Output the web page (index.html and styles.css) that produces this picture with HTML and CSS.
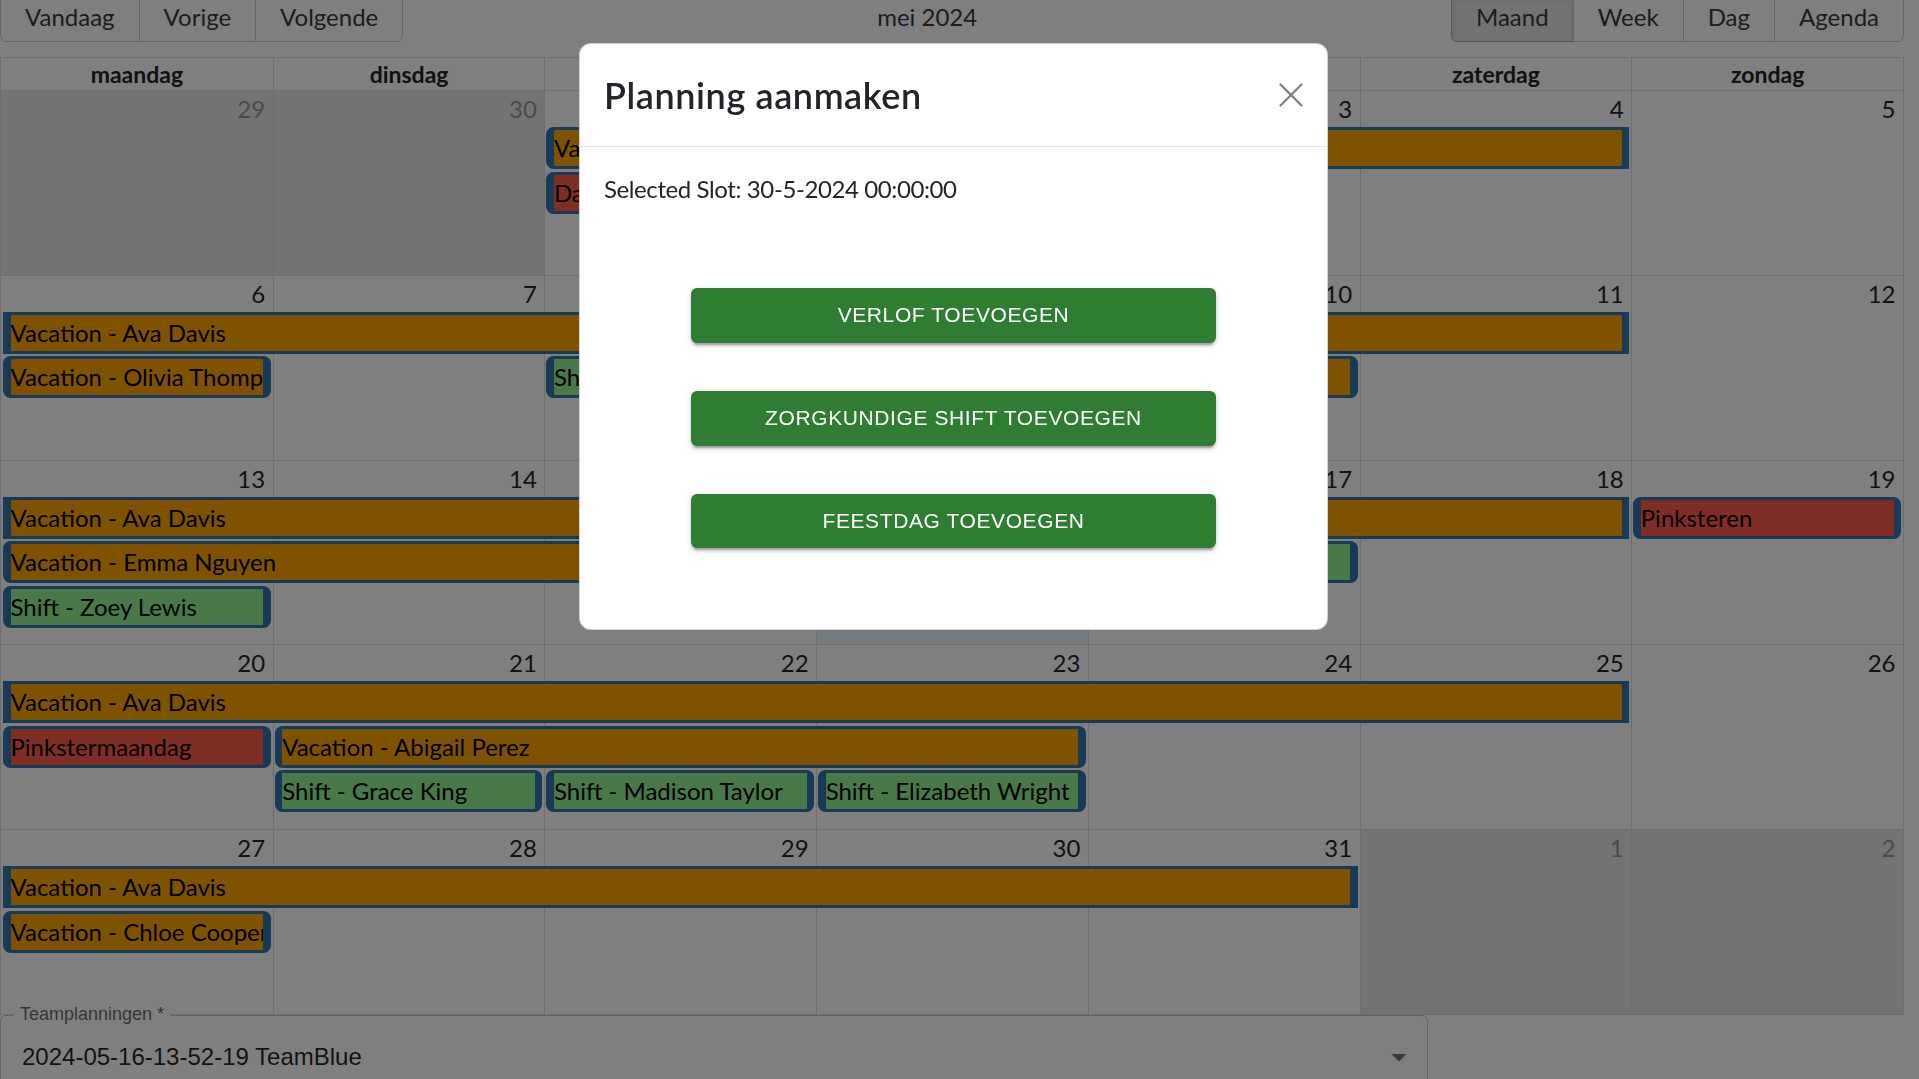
FILE: index.html
```html
<!DOCTYPE html>
<html lang="nl">
<head>
<meta charset="utf-8">
<title>Planning</title>
<link rel="stylesheet" href="styles.css">
</head>
<body>
<div class="app">
  <div class="calendar">
    <div class="toolbar">
      <div class="btn-group">
        <button class="tb-btn">Vandaag</button>
        <button class="tb-btn">Vorige</button>
        <button class="tb-btn">Volgende</button>
      </div>
      <div class="tb-label">mei 2024</div>
      <div class="btn-group">
        <button class="tb-btn active">Maand</button>
        <button class="tb-btn">Week</button>
        <button class="tb-btn">Dag</button>
        <button class="tb-btn">Agenda</button>
      </div>
    </div>

    <div class="month">
      <div class="month-header">
        <div class="hcell">maandag</div>
        <div class="hcell">dinsdag</div>
        <div class="hcell">woensdag</div>
        <div class="hcell">donderdag</div>
        <div class="hcell">vrijdag</div>
        <div class="hcell">zaterdag</div>
        <div class="hcell">zondag</div>
      </div>

      <!-- week 1 -->
      <div class="week">
        <div class="bg c1 off"></div><div class="bg c2 off"></div><div class="bg c3"></div><div class="bg c4"></div><div class="bg c5"></div><div class="bg c6"></div><div class="bg c7"></div>
        <div class="date c1 off">29</div><div class="date c2 off">30</div><div class="date c3">1</div><div class="date c4">2</div><div class="date c5">3</div><div class="date c6">4</div><div class="date c7">5</div>
        <div class="seg c3 w4 r1"><div class="ev ca"><div class="evc orange">Vacation - Ava Davis</div></div></div>
        <div class="seg c3 r2"><div class="ev"><div class="evc red">Dag van de Arbeid</div></div></div>
      </div>

      <!-- week 2 -->
      <div class="week">
        <div class="bg c1"></div><div class="bg c2"></div><div class="bg c3"></div><div class="bg c4"></div><div class="bg c5"></div><div class="bg c6"></div><div class="bg c7"></div>
        <div class="date c1">6</div><div class="date c2">7</div><div class="date c3">8</div><div class="date c4">9</div><div class="date c5">10</div><div class="date c6">11</div><div class="date c7">12</div>
        <div class="seg c1 w6 r1"><div class="ev cp ca"><div class="evc orange">Vacation - Ava Davis</div></div></div>
        <div class="seg c1 r2"><div class="ev"><div class="evc orange">Vacation - Olivia Thompson</div></div></div>
        <div class="seg c3 r2"><div class="ev"><div class="evc green">Shift - Sophia Clark</div></div></div>
        <div class="seg c4 w2 r2"><div class="ev"><div class="evc orange">Vacation - Mia Johnson</div></div></div>
      </div>

      <!-- week 3 -->
      <div class="week">
        <div class="bg c1"></div><div class="bg c2"></div><div class="bg c3"></div><div class="bg c4 today"></div><div class="bg c5"></div><div class="bg c6"></div><div class="bg c7"></div>
        <div class="date c1">13</div><div class="date c2">14</div><div class="date c3">15</div><div class="date c4">16</div><div class="date c5">17</div><div class="date c6">18</div><div class="date c7">19</div>
        <div class="seg c1 w6 r1"><div class="ev cp ca"><div class="evc orange">Vacation - Ava Davis</div></div></div>
        <div class="seg c7 r1"><div class="ev"><div class="evc red">Pinksteren</div></div></div>
        <div class="seg c1 w3 r2"><div class="ev"><div class="evc orange">Vacation - Emma Nguyen</div></div></div>
        <div class="seg c5 r2"><div class="ev"><div class="evc green">Shift - Lily Walker</div></div></div>
        <div class="seg c1 r3"><div class="ev"><div class="evc green">Shift - Zoey Lewis</div></div></div>
      </div>

      <!-- week 4 -->
      <div class="week">
        <div class="bg c1"></div><div class="bg c2"></div><div class="bg c3"></div><div class="bg c4"></div><div class="bg c5"></div><div class="bg c6"></div><div class="bg c7"></div>
        <div class="date c1">20</div><div class="date c2">21</div><div class="date c3">22</div><div class="date c4">23</div><div class="date c5">24</div><div class="date c6">25</div><div class="date c7">26</div>
        <div class="seg c1 w6 r1"><div class="ev cp ca"><div class="evc orange">Vacation - Ava Davis</div></div></div>
        <div class="seg c1 r2"><div class="ev"><div class="evc red">Pinkstermaandag</div></div></div>
        <div class="seg c2 w3 r2"><div class="ev"><div class="evc orange">Vacation - Abigail Perez</div></div></div>
        <div class="seg c2 r3"><div class="ev"><div class="evc green">Shift - Grace King</div></div></div>
        <div class="seg c3 r3"><div class="ev"><div class="evc green">Shift - Madison Taylor</div></div></div>
        <div class="seg c4 r3"><div class="ev"><div class="evc green">Shift - Elizabeth Wright</div></div></div>
      </div>

      <!-- week 5 -->
      <div class="week">
        <div class="bg c1"></div><div class="bg c2"></div><div class="bg c3"></div><div class="bg c4"></div><div class="bg c5"></div><div class="bg c6 off"></div><div class="bg c7 off"></div>
        <div class="date c1">27</div><div class="date c2">28</div><div class="date c3">29</div><div class="date c4">30</div><div class="date c5">31</div><div class="date c6 off">1</div><div class="date c7 off">2</div>
        <div class="seg c1 w5 r1"><div class="ev cp ca"><div class="evc orange">Vacation - Ava Davis</div></div></div>
        <div class="seg c1 r2"><div class="ev"><div class="evc orange">Vacation - Chloe Cooper</div></div></div>
      </div>
    </div>
  </div>

  <div class="field">
    <span class="field-label">Teamplanningen *</span>
    <span class="field-value">2024-05-16-13-52-19 TeamBlue</span>
    <svg class="field-arrow" viewBox="0 0 24 24" width="36" height="36" aria-hidden="true"><path d="M7 10l5 5 5-5z"/></svg>
  </div>
</div>

<div class="backdrop"></div>

<div class="modal" role="dialog">
  <div class="modal-header">
    <h4 class="modal-title">Planning aanmaken</h4>
    <button class="btn-close" aria-label="Close">
      <svg viewBox="0 0 24 24" width="24" height="24"><path d="M1.5 1.5L22.5 22.5M22.5 1.5L1.5 22.5"/></svg>
    </button>
  </div>
  <div class="modal-body">
    <p class="slot">Selected Slot: 30-5-2024 00:00:00</p>
    <div class="actions">
      <button class="mui-btn">Verlof toevoegen</button>
      <button class="mui-btn">Zorgkundige shift toevoegen</button>
      <button class="mui-btn">Feestdag toevoegen</button>
    </div>
  </div>
</div>
</body>
</html>
```

FILE: styles.css
```css
html, body {
  margin: 0;
  height: 100%;
  overflow: hidden;
}

body {
  padding-right: 15px;
  background: #fff;
  color: #212529;
  font-family: "Lato", "Liberation Sans", sans-serif;
  font-size: 24px;
  line-height: 1.5;
}

.app {
  margin-top: -8px;
}

/* ---------- toolbar ---------- */
.toolbar {
  display: flex;
  align-items: center;
  margin-bottom: 15px;
}

.btn-group {
  display: inline-flex;
}

.tb-btn {
  font-family: inherit;
  font-size: 24px;
  line-height: 30px;
  padding: 9px 24px;
  margin: 0;
  border: 1px solid #ccc;
  background: transparent;
  color: #373a3c;
  border-radius: 0;
}

.tb-btn + .tb-btn {
  margin-left: -1px;
}

.tb-btn:first-child {
  border-radius: 6px 0 0 6px;
}

.tb-btn:last-child {
  border-radius: 0 6px 6px 0;
}

.tb-btn.active {
  background: #e6e6e6;
  border-color: #adadad;
  box-shadow: inset 0 4.5px 7.5px rgba(0, 0, 0, 0.125);
}

.tb-label {
  flex-grow: 1;
  text-align: center;
  padding: 0 15px;
  color: #373a3c;
}

/* ---------- month view ---------- */
.month {
  height: 958px;
  box-sizing: border-box;
  border: 1px solid #ddd;
  display: flex;
  flex-direction: column;
}

.month-header {
  display: grid;
  grid-template-columns: repeat(7, 1fr);
  border-bottom: 1px solid #ddd;
}

.hcell {
  text-align: center;
  font-weight: 700;
  font-size: 23px;
  line-height: 32px;
  padding: 0 4.5px;
  white-space: nowrap;
  overflow: hidden;
}

.hcell + .hcell {
  border-left: 1px solid #ddd;
}

.week {
  flex: 1 1 0;
  min-height: 0;
  display: grid;
  grid-template-columns: repeat(7, 1fr);
  grid-template-rows: 36px 44.5px 44.5px 44.5px 1fr;
}

.week + .week {
  border-top: 1px solid #ddd;
}

.c1 { grid-column-start: 1; }
.c2 { grid-column-start: 2; }
.c3 { grid-column-start: 3; }
.c4 { grid-column-start: 4; }
.c5 { grid-column-start: 5; }
.c6 { grid-column-start: 6; }
.c7 { grid-column-start: 7; }

.w2 { grid-column-end: span 2; }
.w3 { grid-column-end: span 3; }
.w4 { grid-column-end: span 4; }
.w5 { grid-column-end: span 5; }
.w6 { grid-column-end: span 6; }

.r1 { grid-row: 2; }
.r2 { grid-row: 3; }
.r3 { grid-row: 4; }

.bg {
  grid-row: 1 / -1;
}

.bg + .bg {
  border-left: 1px solid #ddd;
}

.bg.off {
  background: #e6e6e6;
}

.bg.today {
  background: #eaf6ff;
}

.date {
  grid-row: 1;
  text-align: right;
  padding-right: 7.5px;
  line-height: 36px;
}

.date.off {
  color: #999;
}

.seg {
  min-width: 0;
  padding: 0 2px 2.5px;
}

.ev {
  background: #3174ad;
  padding: 3px 7.5px;
  border-radius: 7.5px;
}

.ev.cp {
  border-top-left-radius: 0;
  border-bottom-left-radius: 0;
}

.ev.ca {
  border-top-right-radius: 0;
  border-bottom-right-radius: 0;
}

.evc {
  line-height: 36px;
  white-space: nowrap;
  overflow: hidden;
  color: #000;
}

.orange { background: #ffa500; }
.red { background: #fc5d4b; }
.green { background: #92f192; }

/* ---------- select field ---------- */
.field {
  position: relative;
  width: 1428px;
  height: 84px;
  box-sizing: border-box;
  border: 1px solid rgba(0, 0, 0, 0.23);
  border-radius: 6px;
  padding: 0 10px 0 21px;
  display: flex;
  align-items: center;
  justify-content: space-between;
  font-family: "Liberation Sans", Arial, sans-serif;
  font-size: 24px;
  line-height: 34.5px;
  color: rgba(0, 0, 0, 0.87);
}

.field-label {
  position: absolute;
  left: 13px;
  top: -11px;
  padding: 0 6px;
  background: #fff;
  font-size: 18px;
  line-height: 18px;
  color: rgba(0, 0, 0, 0.6);
}

.field-arrow {
  fill: rgba(0, 0, 0, 0.54);
  flex: none;
}

/* ---------- modal ---------- */
.backdrop {
  position: fixed;
  inset: 0;
  background: rgba(0, 0, 0, 0.5);
}

.modal {
  position: fixed;
  top: 43px;
  left: 579px;
  width: 749px;
  box-sizing: border-box;
  background: #fff;
  border: 1px solid rgba(0, 0, 0, 0.175);
  border-radius: 12px;
  color: #212529;
}

.modal-header {
  display: flex;
  align-items: center;
  justify-content: space-between;
  padding: 24px;
  border-bottom: 1px solid #dee2e6;
}

.modal-title {
  margin: 0;
  font-size: 36px;
  font-weight: 600;
  line-height: 1.5;
  letter-spacing: 0.6px;
}

.btn-close {
  width: 24px;
  height: 24px;
  padding: 0;
  border: 0;
  background: transparent;
  display: flex;
}

.btn-close svg path {
  stroke: #000;
  stroke-opacity: 0.5;
  stroke-width: 2.2;
  stroke-linecap: round;
  fill: none;
}

.modal-body {
  padding: 24px;
}

.slot {
  margin: 0;
  line-height: 36px;
  letter-spacing: -0.4px;
}

.actions {
  display: flex;
  flex-direction: column;
  align-items: center;
  gap: 48px;
  margin: 81px 0 57px;
}

.mui-btn {
  width: 525px;
  padding: 9px 24px;
  border: 0;
  border-radius: 6px;
  background: #2e7d32;
  color: #fff;
  font-family: "Liberation Sans", Arial, sans-serif;
  font-weight: 400;
  font-size: 21px;
  line-height: 1.75;
  letter-spacing: 0.6px;
  text-transform: uppercase;
  box-shadow: 0 4.5px 1.5px -3px rgba(0, 0, 0, 0.2),
              0 3px 3px 0 rgba(0, 0, 0, 0.14),
              0 1.5px 7.5px 0 rgba(0, 0, 0, 0.12);
}
```
